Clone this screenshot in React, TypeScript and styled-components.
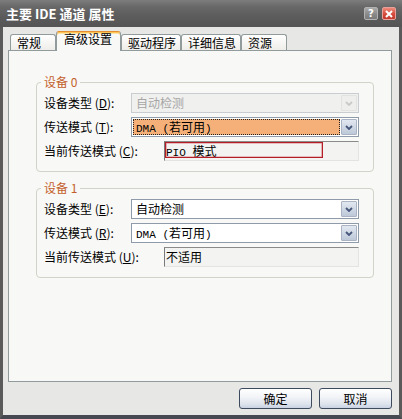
import React from "react";
import styled, { createGlobalStyle, css } from "styled-components";

const GlobalStyle = createGlobalStyle`
  html, body { margin: 0; padding: 0; background: #2b3242; }
  body { font-family: "Noto Sans CJK SC", "Noto Sans", sans-serif; font-size: 12px; }
  * { box-sizing: border-box; }
`;

const Window = styled.div`
  width: 402px;
  height: 419px;
  display: flex;
  flex-direction: column;
`;

const TitleBar = styled.div`
  height: 27px;
  flex: none;
  display: flex;
  align-items: center;
  gap: 4px;
  padding: 0 6px;
  background: linear-gradient(#7d7d7d 0%, #686868 25%, #5c5c5c 60%, #545454 100%);
`;

const Title = styled.div`
  flex: 1;
  color: #fff;
  font-weight: bold;
  font-size: 13px;
  line-height: 16px;
  white-space: nowrap;
`;

const CaptionButton = styled.div<{ $variant: "help" | "close" }>`
  width: 14px;
  height: 13px;
  border-radius: 2px;
  display: flex;
  align-items: center;
  justify-content: center;
  color: #fff;
  font-family: "DejaVu Sans", sans-serif;
  font-weight: bold;
  font-size: 10px;
  line-height: 10px;
  ${(p) =>
    p.$variant === "close"
      ? css`
          background: linear-gradient(#ef8a7c, #d64a3c 55%, #c23a2e);
          border: 1px solid #e9a09a;
        `
      : css`
          background: linear-gradient(#a9a9a9, #8a8a8a 55%, #7a7a7a);
          border: 1px solid #b2b2b2;
        `}
`;

const Body = styled.div`
  flex: 1;
  display: flex;
  flex-direction: column;
  padding: 4px 7px 0 5px;
  background: #e7e7e5;
  border-left: 3px solid #5a5a5a;
  border-right: 3px solid #5a5a5a;
  border-bottom: 4px solid #464852;
`;

const TabStrip = styled.div`
  display: flex;
  align-items: flex-end;
  height: 20px;
  padding-left: 2px;
  margin-bottom: -1px;
  position: relative;
  z-index: 1;
`;

const Tab = styled.div<{ $active?: boolean }>`
  min-width: 46px;
  font-size: 12px;
  line-height: 14px;
  color: #000;
  white-space: nowrap;
  border: 1px solid #919b9c;
  border-bottom: none;
  border-radius: 3px 3px 0 0;
  ${(p) =>
    p.$active
      ? css`
          height: 20px;
          padding: 0 8px 0 7px;
          background: #f8f8f6;
          border-top: 1px solid #e38f2f;
          box-shadow: inset 0 1px #fdc456, inset 0 2px #fde3aa;
        `
      : css`
          height: 16px;
          margin-bottom: 1px;
          padding: 1px 4px 0 6px;
          background: linear-gradient(#ffffff, #eeede9);
        `}
`;

const Panel = styled.div`
  height: 332px;
  flex: none;
  border: 1px solid #919b9c;
  background: #f8f8f6;
  padding: 31px 17px 0 27px;
  display: flex;
  flex-direction: column;
  gap: 16px;
`;

const Group = styled.div`
  position: relative;
  border: 1px solid #d2d2ca;
  border-radius: 4px;
  padding: 10px 14px 10px 7px;
  display: flex;
  flex-direction: column;
  gap: 4px;
`;

const Legend = styled.div`
  position: absolute;
  top: -8px;
  left: 4px;
  padding: 0 3px;
  line-height: 14px;
  color: #c4602b;
  background: #f8f8f6;
`;

const Row = styled.div<{ $labelW: number }>`
  display: grid;
  grid-template-columns: ${(p) => p.$labelW}px 1fr;
  align-items: center;
  height: 20px;
`;

const Label = styled.div`
  line-height: 14px;
  color: #000;
  white-space: nowrap;
`;

const Mono = styled.span`
  font-family: "Liberation Mono", monospace;
  font-size: 11px;
`;

const Combo = styled.div<{ $disabled?: boolean }>`
  display: flex;
  height: 20px;
  border: 1px solid ${(p) => (p.$disabled ? "#c9cdd1" : "#8f9bab")};
  background: ${(p) => (p.$disabled ? "#f0f0ee" : "#ffffff")};
`;

const ComboValue = styled.div<{ $focused?: boolean; $disabled?: boolean }>`
  flex: 1;
  margin: 1px;
  padding: 0 2px;
  line-height: 14px;
  white-space: pre;
  color: ${(p) => (p.$disabled ? "#a6a6a6" : "#000")};
  border: 1px dotted ${(p) => (p.$focused ? "#222" : "transparent")};
  background: ${(p) => (p.$focused ? "#f5b07a" : "transparent")};
`;

const ComboButton = styled.div<{ $disabled?: boolean }>`
  width: 16px;
  margin: 1px 1px 1px 0;
  border-radius: 1px;
  display: flex;
  align-items: center;
  justify-content: center;
  ${(p) =>
    p.$disabled
      ? css`
          border: 1px solid #e2e2e0;
          background: #eeeeec;
          color: #c9c9c9;
        `
      : css`
          border: 1px solid #a9b3c4;
          background: linear-gradient(#e2e8f1, #bdc8d8);
          color: #46567a;
        `}
`;

const Field = styled.div`
  position: relative;
  height: 20px;
  border: 1px solid;
  border-color: #8a8a8a #e3e3e1 #e3e3e1 #7a7a7a;
  background: #f3f3f1;
  padding-left: 1px;
  line-height: 18px;
  color: #000;
  white-space: pre;
`;

const Annotation = styled.div`
  position: absolute;
  left: 0;
  top: 0;
  width: 158px;
  height: 16px;
  border: 1px solid #b51d27;
  box-shadow: inset 0 0 0 0.6px rgba(200, 60, 70, 0.6);
  pointer-events: none;
`;

const ButtonRow = styled.div`
  display: flex;
  justify-content: flex-end;
  gap: 7px;
  margin-top: 6px;
`;

const DialogButton = styled.button`
  width: 73px;
  height: 21px;
  padding: 0;
  border: 1px solid #3e4a5d;
  border-radius: 3px;
  background: linear-gradient(#ffffff, #f1f3f7 45%, #dde3ec 80%, #c9d2e2);
  font-family: "Noto Sans CJK SC", sans-serif;
  font-size: 12px;
  line-height: 17px;
  color: #000;
`;

const Chevron = () => (
  <svg width="8" height="5" viewBox="0 0 8 5">
    <path d="M1 1 L4 4 L7 1" fill="none" stroke="currentColor" strokeWidth="1.8" />
  </svg>
);

const CloseX = () => (
  <svg width="8" height="8" viewBox="0 0 8 8">
    <path d="M1 1 L7 7 M7 1 L1 7" stroke="#fff" strokeWidth="2" />
  </svg>
);

const DmaText = () => (
  <>
    <Mono>DMA (</Mono>若可用<Mono>)</Mono>
  </>
);

export default function App() {
  return (
    <>
      <GlobalStyle />
      <Window>
        <TitleBar>
          <Title>主要 IDE 通道 属性</Title>
          <CaptionButton $variant="help">?</CaptionButton>
          <CaptionButton $variant="close">
            <CloseX />
          </CaptionButton>
        </TitleBar>
        <Body>
          <TabStrip>
            <Tab>常规</Tab>
            <Tab $active>高级设置</Tab>
            <Tab>驱动程序</Tab>
            <Tab>详细信息</Tab>
            <Tab>资源</Tab>
          </TabStrip>
          <Panel>
            <Group>
              <Legend>设备 0</Legend>
              <Row $labelW={87}>
                <Label>
                  设备类型 (<u>D</u>):
                </Label>
                <Combo $disabled>
                  <ComboValue $disabled>自动检测</ComboValue>
                  <ComboButton $disabled>
                    <Chevron />
                  </ComboButton>
                </Combo>
              </Row>
              <Row $labelW={87}>
                <Label>
                  传送模式 (<u>T</u>):
                </Label>
                <Combo>
                  <ComboValue $focused>
                    <DmaText />
                  </ComboValue>
                  <ComboButton>
                    <Chevron />
                  </ComboButton>
                </Combo>
              </Row>
              <Row $labelW={120}>
                <Label>
                  当前传送模式 (<u>C</u>):
                </Label>
                <Field>
                  <Mono>PIO </Mono>模式
                  <Annotation />
                </Field>
              </Row>
            </Group>
            <Group>
              <Legend>设备 1</Legend>
              <Row $labelW={87}>
                <Label>
                  设备类型 (<u>E</u>):
                </Label>
                <Combo>
                  <ComboValue>自动检测</ComboValue>
                  <ComboButton>
                    <Chevron />
                  </ComboButton>
                </Combo>
              </Row>
              <Row $labelW={87}>
                <Label>
                  传送模式 (<u>R</u>):
                </Label>
                <Combo>
                  <ComboValue>
                    <DmaText />
                  </ComboValue>
                  <ComboButton>
                    <Chevron />
                  </ComboButton>
                </Combo>
              </Row>
              <Row $labelW={120}>
                <Label>
                  当前传送模式 (<u>U</u>):
                </Label>
                <Field>不适用</Field>
              </Row>
            </Group>
          </Panel>
          <ButtonRow>
            <DialogButton>确定</DialogButton>
            <DialogButton>取消</DialogButton>
          </ButtonRow>
        </Body>
      </Window>
    </>
  );
}
